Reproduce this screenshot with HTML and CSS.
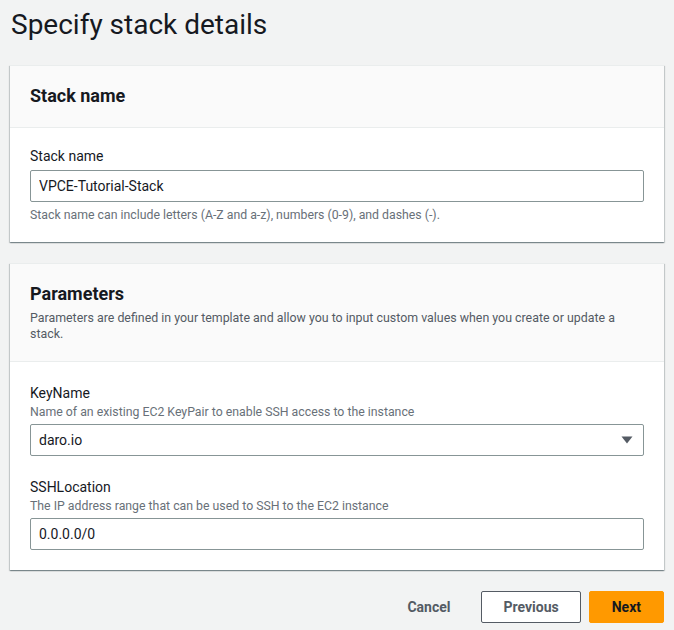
FILE: index.html
```html
<!DOCTYPE html>
<html lang="en">
<head>
<meta charset="utf-8">
<title>Specify stack details</title>
<link rel="stylesheet" href="styles.css">
</head>
<body>
<main class="page">
  <h1 class="page-title">Specify stack details</h1>

  <section class="card">
    <header class="card-header">
      <h2 class="card-title">Stack name</h2>
    </header>
    <div class="card-body">
      <div class="field">
        <label class="field-label" for="stackName">Stack name</label>
        <input class="text-input" id="stackName" type="text" value="VPCE-Tutorial-Stack">
        <p class="field-hint hint-after">Stack name can include letters (A-Z and a-z), numbers (0-9), and dashes (-).</p>
      </div>
    </div>
  </section>

  <section class="card">
    <header class="card-header">
      <h2 class="card-title">Parameters</h2>
      <p class="card-desc">Parameters are defined in your template and allow you to input custom values when you create or update a stack.</p>
    </header>
    <div class="card-body card-body-params">
      <div class="field">
        <label class="field-label">KeyName</label>
        <p class="field-hint">Name of an existing EC2 KeyPair to enable SSH access to the instance</p>
        <div class="select">
          <span class="select-value">daro.io</span>
          <svg class="select-arrow" width="12" height="8" viewBox="0 0 12 8"><polygon points="0.5,0.5 11.5,0.5 6,7.5" fill="#545b64"/></svg>
        </div>
      </div>
      <div class="field">
        <label class="field-label" for="sshLoc">SSHLocation</label>
        <p class="field-hint">The IP address range that can be used to SSH to the EC2 instance</p>
        <input class="text-input" id="sshLoc" type="text" value="0.0.0.0/0">
      </div>
    </div>
  </section>

  <div class="actions">
    <button class="btn btn-link" type="button">Cancel</button>
    <button class="btn btn-normal" type="button">Previous</button>
    <button class="btn btn-primary" type="button">Next</button>
  </div>
</main>
</body>
</html>
```
FILE: styles.css
```css
* { box-sizing: border-box; }

body {
  margin: 0;
  background: #f2f3f3;
  font-family: Roboto, "Noto Sans", Arial, sans-serif;
  color: #16191f;
}

.page {
  padding: 7px 10px 0 10px;
}

.page-title {
  margin: 0 0 22px 1px;
  font-size: 28px;
  line-height: 36px;
  font-weight: 400;
  color: #16191f;
}

.card {
  background: #ffffff;
  margin-bottom: 21px;
  box-shadow: 0 1px 1px 0 rgba(0, 28, 36, 0.3),
              1px 1px 1px 0 rgba(0, 28, 36, 0.15),
              -1px 1px 1px 0 rgba(0, 28, 36, 0.15);
  border-top: 1px solid #eaeded;
}

.card-header {
  background: #fafafa;
  padding: 18px 20px 19px 20px;
  border-bottom: 1px solid #eaeded;
}

.card-title {
  margin: 0;
  font-size: 18px;
  line-height: 24px;
  font-weight: 700;
  color: #16191f;
}

.card-desc {
  margin: 4px 0 0 0;
  font-size: 12.4px;
  line-height: 16px;
  color: #545b64;
}

.card-body {
  padding: 17px 20px 19px 20px;
  display: flex;
  flex-direction: column;
  gap: 20px;
}

.card-body-params {
  padding: 20px 20px 20px 20px;
}

.field {
  display: flex;
  flex-direction: column;
}

.field-label {
  font-size: 14px;
  line-height: 22px;
  color: #16191f;
  margin-bottom: 3px;
}

.card-body-params .field-label {
  margin-bottom: 0;
}

.field-hint {
  margin: 0 0 4px 0;
  font-size: 12.3px;
  line-height: 16px;
  color: #687078;
}

.field-hint.hint-after {
  margin: 5px 0 0 0;
}

.text-input,
.select {
  width: 100%;
  height: 32px;
  border: 1px solid #879596;
  border-radius: 2px;
  background: #ffffff;
  font-family: Roboto, "Noto Sans", Arial, sans-serif;
  font-size: 14px;
  color: #16191f;
  padding: 0 8px;
  margin: 0;
  outline: none;
}

.select {
  display: flex;
  align-items: center;
  justify-content: space-between;
  padding: 0 10px 0 8px;
}

.select-arrow {
  display: block;
}

.actions {
  display: flex;
  justify-content: flex-end;
  align-items: center;
  gap: 8px;
}

.btn {
  font-family: Roboto, "Noto Sans", Arial, sans-serif;
  font-size: 14px;
  font-weight: 700;
  line-height: 22px;
  height: 32px;
  padding: 4px 22px;
  border-radius: 2px;
  border: 1px solid transparent;
  cursor: pointer;
}

.btn-link {
  background: transparent;
  color: #545b64;
}

.btn-normal {
  background: #ffffff;
  border-color: #545b64;
  color: #545b64;
  padding: 4px 21px;
}

.btn-primary {
  background: #ff9900;
  border-color: #ff9900;
  color: #16191f;
}
```
